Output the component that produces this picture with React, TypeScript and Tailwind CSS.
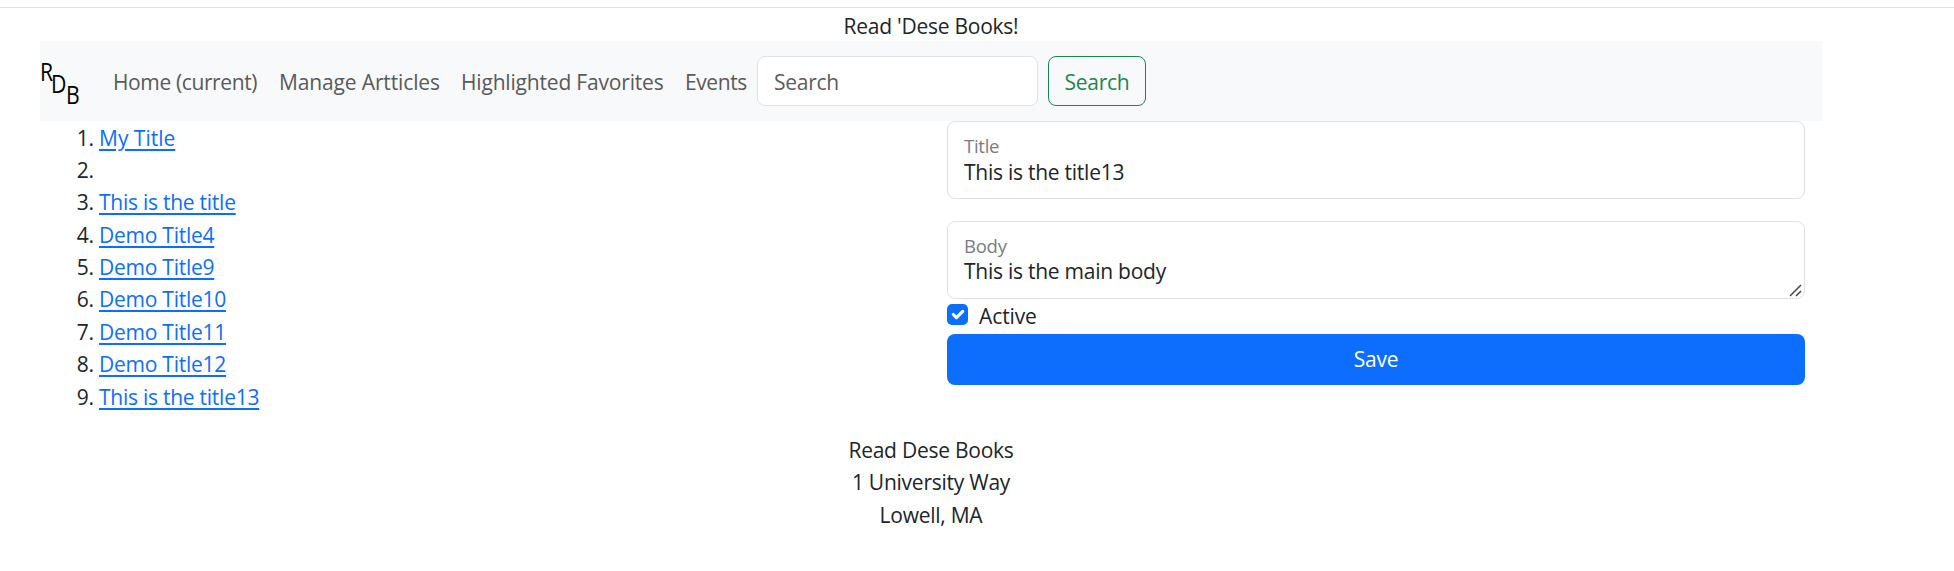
const links = [
  { label: 'Home (current)', cls: 'w-[145px] tracking-[-0.38px]' },
  { label: 'Manage Artticles', cls: 'w-[161px] tracking-[-0.14px]' },
  { label: 'Highlighted Favorites', cls: 'w-[203px] tracking-[-0.18px]' },
  { label: 'Events', cls: 'w-[62px] tracking-[-0.4px]' },
];

const articles = [
  'My Title',
  '',
  'This is the title',
  'Demo Title4',
  'Demo Title9',
  'Demo Title10',
  'Demo Title11',
  'Demo Title12',
  'This is the title13',
];

function Logo() {
  return (
    <div className="flex h-[41px] w-[41px] items-start font-['Open_Sans',sans-serif] text-[25px] leading-[20px] font-medium tracking-normal text-black">
      <span className="w-[11px] origin-left scale-x-[0.85]">R</span>
      <span className="mt-[12px] w-[15px] origin-left scale-x-[0.85]">D</span>
      <span className="mt-[23px] origin-left scale-x-[0.85]">B</span>
    </div>
  );
}

export default function App() {
  return (
    <div className="h-[571px] overflow-hidden bg-white pt-[7px] font-['Open_Sans',sans-serif] text-[21px] leading-[32.4px] tracking-[-0.25px] text-[#212529]">
      <div className="border-t border-[#dee2e6]" />
      <div className="ml-[40px] w-[1782px]">
        <header className="h-[33px] pt-[2px] text-center">Read 'Dese Books!</header>
        <nav className="flex h-[80px] items-center bg-[#f8f9fa]">
          <Logo />
          <ul className="ml-[32px] flex gap-[21px] pt-[2px] whitespace-nowrap text-[#595a5b]">
            {links.map((l) => (
              <li key={l.label} className={l.cls}>{l.label}</li>
            ))}
          </ul>
          <form className="ml-[10px] flex gap-[10px]">
            <input
              placeholder="Search"
              className="h-[50px] w-[281px] rounded-[8px] border border-[#dee2e6] bg-white px-[16px] pt-[2px] placeholder:text-[#595c5f]"
            />
            <button type="button" className="h-[50px] w-[98px] rounded-[8px] border border-[#198754] pt-[2px] text-[#198754]">
              Search
            </button>
          </form>
        </nav>
        <main className="flex h-[313px]">
          <ol className="w-[907px] list-decimal pt-[0.5px] pl-[59px]">
            {articles.map((a, i) => (
              <li key={i} className="h-[32.4px]">
                <a className={`text-[#0d6efd] underline decoration-[2px] underline-offset-[3px] ${i === 0 ? 'tracking-[0px]' : ''}`}>{a}</a>
              </li>
            ))}
          </ol>
          <form className="w-[858px]">
            <div className="h-[78px] rounded-[8px] border border-[#dee2e6] px-[16px] pt-[11px]">
              <div className="text-[18.5px] leading-[26px] text-[#7a7c7f]">Title</div>
              <div className="leading-[26px]">This is the title13</div>
            </div>
            <div className="relative mt-[22px] h-[78px] rounded-[8px] border border-[#dee2e6] px-[16px] pt-[11px]">
              <div className="text-[18.5px] leading-[26px] text-[#7a7c7f]">Body</div>
              <div className="leading-[24px]">This is the main body</div>
              <svg className="absolute right-[2px] bottom-[1px]" width="13" height="13" viewBox="0 0 13 13" fill="none" stroke="#444" strokeWidth="1.5">
                <path d="M1 12 12 1M7 12 12 7" />
              </svg>
            </div>
            <label className="flex h-[35px] items-center gap-[11px]">
              <span className="mb-[4px] flex h-[21px] w-[21px] items-center justify-center rounded-[5px] bg-[#0d6efd]">
                <svg width="21" height="21" viewBox="0 0 20 20" fill="none" stroke="#fff" strokeWidth="3" strokeLinecap="round" strokeLinejoin="round">
                  <path d="m6 10 3 3 6-6" />
                </svg>
              </span>
              <span className="tracking-[-0.1px]">Active</span>
            </label>
            <button type="button" className="block h-[51px] w-full rounded-[8px] bg-[#0d6efd] text-white">
              Save
            </button>
          </form>
        </main>
        <footer className="text-center">
          <div>Read Dese Books</div>
          <div>1 University Way</div>
          <div>Lowell, MA</div>
        </footer>
      </div>
    </div>
  );
}
